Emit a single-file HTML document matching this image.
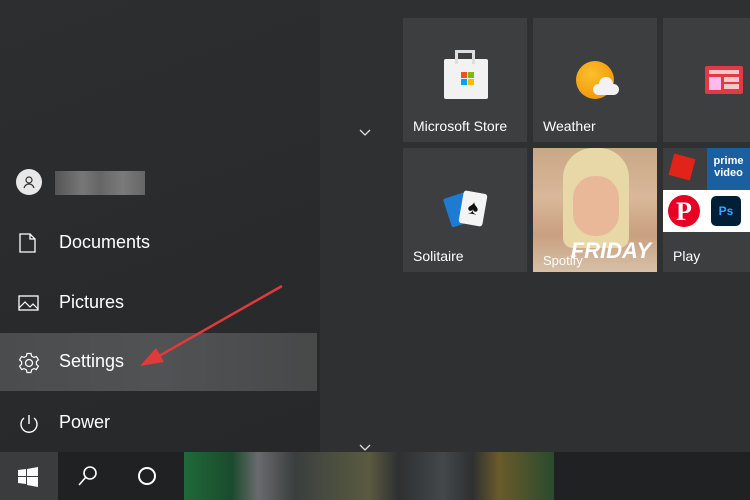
<!DOCTYPE html><html><head><style>
body{margin:0;width:750px;height:500px;overflow:hidden;position:relative;background:#2b2d2f;font-family:"Liberation Sans",sans-serif;color:#fff}
.a{position:absolute}
.tile{position:absolute;background:#3c3e40;width:124px;height:124px}
.tl{position:absolute;left:10px;bottom:8px;font-size:14px}
.item{position:absolute;left:0;width:317px;height:58px;font-size:18px}
.item span{position:absolute;left:59px;top:18px}
.item svg{position:absolute;left:18px;top:19px}
</style></head><body>
<div class="a" style="left:0;top:0;width:320px;height:452px;background:linear-gradient(160deg,#2c2e2f,#26282a)"></div>
<div class="a" style="left:320px;top:0;width:430px;height:452px;background:#2e3032"></div>
<div class="a" style="left:16px;top:169px;width:26px;height:26px;border-radius:50%;background:#e8e8e8"></div>
<svg class="a" style="left:21px;top:174px" width="16" height="16" viewBox="0 0 16 16"><circle cx="8" cy="6" r="3" fill="none" stroke="#333" stroke-width="1.2"/><path d="M3 14c1-3 3-4 5-4s4 1 5 4" fill="none" stroke="#333" stroke-width="1.2"/></svg>
<div class="a" style="left:55px;top:171px;width:90px;height:24px;background:linear-gradient(90deg,#555,#777 30%,#666 50%,#7a7a7a 75%,#666)"></div>
<div class="item" style="top:214px"><svg width="20" height="20"><path d="M2 1h10l5 5v13H2z M12 1v5h5" fill="none" stroke="#fff" stroke-width="1.3"/></svg><span>Documents</span></div>
<div class="item" style="top:274px"><svg width="22" height="20"><rect x="1" y="3" width="19" height="14" fill="none" stroke="#fff" stroke-width="1.3"/><path d="M1 15l6-6 5 5 3-3 5 5" fill="none" stroke="#fff" stroke-width="1.2"/></svg><span>Pictures</span></div>
<div class="item" style="top:333px;height:58px;background:linear-gradient(90deg,#4a4c4e,#505254 50%,#474949)"><svg width="22" height="22" viewBox="0 0 22 22"><circle cx="11" cy="11" r="3.5" fill="none" stroke="#fff" stroke-width="1.3"/><path d="M9 1.5h4l.6 2.6 2.3 1.3 2.5-.9 2 3.4-2 1.8v2.6l2 1.8-2 3.4-2.5-.9-2.3 1.3-.6 2.6H9l-.6-2.6-2.3-1.3-2.5.9-2-3.4 2-1.8V9.7l-2-1.8 2-3.4 2.5.9 2.3-1.3z" fill="none" stroke="#fff" stroke-width="1.2"/></svg><span>Settings</span></div>
<div class="item" style="top:394px"><svg width="22" height="22"><path d="M6 5a8 8 0 1 0 10 0" fill="none" stroke="#fff" stroke-width="1.4"/><path d="M11 2v9" stroke="#fff" stroke-width="1.4"/></svg><span>Power</span></div>
<svg class="a" style="left:0;top:0" width="320" height="452"><line x1="282" y1="286" x2="152" y2="360" stroke="#e03a3a" stroke-width="2.5"/><path d="M140 366l24-4-8-14z" fill="#e03a3a"/></svg>
<svg class="a" style="left:359px;top:129px" width="12" height="8"><path d="M1 1l5 5 5-5" fill="none" stroke="#ddd" stroke-width="1.3"/></svg>
<svg class="a" style="left:359px;top:444px" width="12" height="8"><path d="M1 1l5 5 5-5" fill="none" stroke="#ddd" stroke-width="1.3"/></svg>
<div class="tile" style="left:403px;top:18px"><div class="a" style="left:41px;top:41px;width:44px;height:40px;background:#f2f2f2;border-radius:2px"></div><div class="a" style="left:52px;top:32px;width:20px;height:14px;border:3px solid #ddd;border-bottom:0;box-sizing:border-box"></div><div class="a" style="left:58px;top:54px;width:6px;height:6px;background:#f25022"></div><div class="a" style="left:65px;top:54px;width:6px;height:6px;background:#7fba00"></div><div class="a" style="left:58px;top:61px;width:6px;height:6px;background:#00a4ef"></div><div class="a" style="left:65px;top:61px;width:6px;height:6px;background:#ffb900"></div><div class="tl">Microsoft Store</div></div>
<div class="tile" style="left:533px;top:18px"><div class="a" style="left:43px;top:43px;width:38px;height:38px;border-radius:50%;background:radial-gradient(circle at 40% 35%,#fbc02d,#f08c00)"></div><div class="a" style="left:60px;top:66px;width:26px;height:11px;border-radius:6px;background:#f2f2f2"></div><div class="a" style="left:66px;top:59px;width:14px;height:14px;border-radius:50%;background:#f2f2f2"></div><div class="tl">Weather</div></div>
<div class="tile" style="left:663px;top:18px;width:87px"><div class="a" style="left:42px;top:48px;width:38px;height:28px;background:#e23a44;border-radius:2px"></div><div class="a" style="left:46px;top:52px;width:30px;height:4px;background:#f8c8c8"></div><div class="a" style="left:46px;top:59px;width:12px;height:13px;background:#fbe"></div><div class="a" style="left:61px;top:59px;width:15px;height:5px;background:#f8c8c8"></div><div class="a" style="left:61px;top:66px;width:15px;height:5px;background:#f8c8c8"></div></div>
<div class="tile" style="left:403px;top:148px"><div class="a" style="left:44px;top:47px;width:22px;height:30px;background:#1e7bd2;transform:rotate(-18deg);border-radius:2px"></div><div class="a" style="left:58px;top:44px;width:24px;height:33px;background:#f4f4f4;transform:rotate(10deg);border-radius:3px;color:#111;font-size:20px;text-align:center;line-height:33px">♠</div><div class="tl">Solitaire</div></div>
<div class="tile" style="left:533px;top:148px;background:linear-gradient(180deg,#c9a886,#d8b898 40%,#c9a080 70%,#d6c0a8)"><div class="a" style="left:30px;top:0;width:66px;height:100px;border-radius:30px 30px 10px 10px;background:#e8d8a8"></div><div class="a" style="left:40px;top:28px;width:46px;height:60px;border-radius:22px;background:#e8b898"></div><div class="a" style="left:0;top:90px;width:124px;height:26px;font:italic bold 22px 'Liberation Sans';color:#fff;text-align:right;padding-right:6px;box-sizing:border-box">FRIDAY</div><div class="tl" style="bottom:4px;font-size:13px">Spotify</div></div>
<div class="tile" style="left:663px;top:148px;width:87px"><div class="a" style="left:44px;top:0;width:43px;height:42px;background:#1a5fa0;font-size:11px;font-weight:bold;text-align:center;line-height:12px;padding-top:7px;box-sizing:border-box">prime<br>video</div><div class="a" style="left:0;top:42px;width:87px;height:42px;background:#fff"></div><div class="a" style="left:5px;top:47px;width:32px;height:32px;border-radius:50%;background:#e60023;color:#fff;font:bold 26px 'Liberation Serif';text-align:center;line-height:33px">P</div><div class="a" style="left:48px;top:48px;width:30px;height:30px;border-radius:5px;background:#001e36;color:#31a8ff;font:bold 12px 'Liberation Sans';text-align:center;line-height:30px">Ps</div><div class="a" style="left:8px;top:8px;width:22px;height:22px;background:#e2231a;transform:rotate(15deg)"></div><div class="tl">Play</div></div>
<div class="a" style="left:0;top:452px;width:750px;height:48px;background:#1f2123"></div>
<div class="a" style="left:0;top:452px;width:58px;height:48px;background:#3a3c3e"></div>
<svg class="a" style="left:18px;top:467px" width="20" height="20"><path d="M0 3l8-1v7H0zM9 2l11-2v9H9zM0 10h8v7l-8-1zM9 10h11v10l-11-2z" fill="#fff"/></svg>
<svg class="a" style="left:77px;top:465px" width="22" height="22"><circle cx="13" cy="8" r="6" fill="none" stroke="#fff" stroke-width="1.6"/><path d="M9 12l-7 8" stroke="#fff" stroke-width="1.6"/></svg>
<div class="a" style="left:138px;top:467px;width:14px;height:14px;border:2.5px solid #fff;border-radius:50%"></div>
<div class="a" style="left:184px;top:452px;width:370px;height:48px;background:linear-gradient(90deg,#1f6a3a 0,#1b4a2c 13%,#6a6a6e 20%,#3a3e3e 30%,#4a4e40 40%,#5a5a40 50%,#2e3032 58%,#44484a 70%,#2e3032 78%,#6a5a2a 85%,#2a4a2e 100%)"></div>
</body></html>
